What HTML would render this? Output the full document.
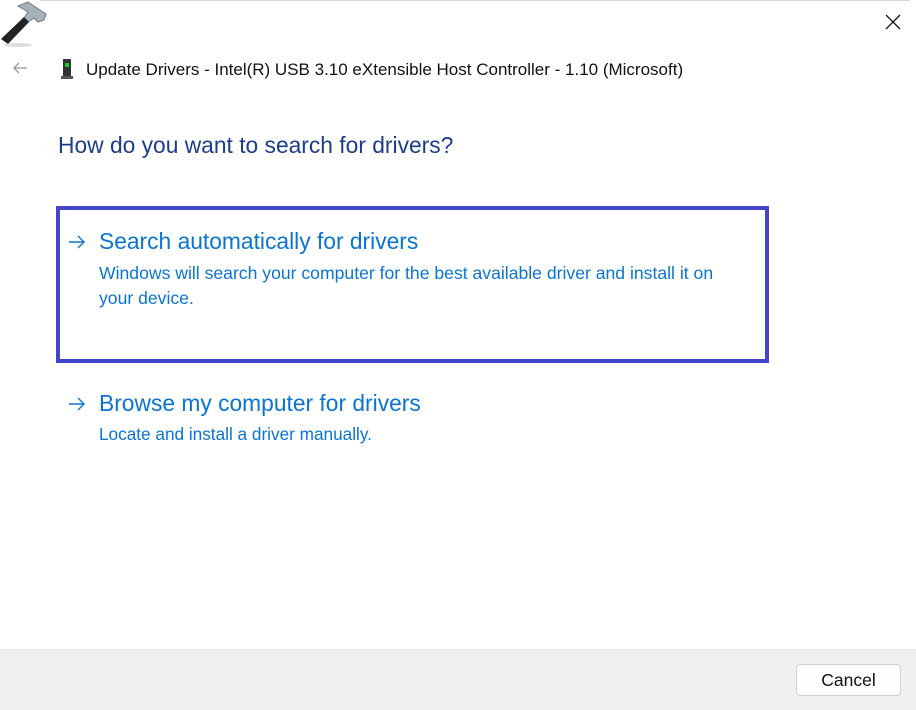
<!DOCTYPE html>
<html><head><style>
body{margin:0;width:916px;height:709px;overflow:hidden;background:#fff;font-family:"Segoe UI","Liberation Sans",sans-serif;position:relative}
.a{position:absolute;white-space:nowrap}
</style></head><body>
<div class="a" style="left:40px;top:0;width:870px;height:1px;background:#d8d8d8"></div>
<svg class="a" style="left:0;top:0" width="50" height="48" viewBox="0 0 50 48">
<path d="M18 6 L28 2 L40 10 L46 14 L44 20 L38 22 L34 18 L28 22 L24 18 L28 12 Z" fill="#a8b0b8" stroke="#707880" stroke-width="1"/>
<path d="M24 17 L29 22 L8 44 L1 39 Z" fill="#222"/>
<ellipse cx="18" cy="45" rx="14" ry="2" fill="#ddd"/>
</svg>
<svg class="a" style="left:12px;top:62px" width="16" height="12" viewBox="0 0 16 12"><path d="M15 6H2M7 1L2 6L7 11" fill="none" stroke="#999" stroke-width="1.3"/></svg>
<svg class="a" style="left:60px;top:58px" width="14" height="22" viewBox="0 0 14 22"><rect x="3" y="1" width="8" height="18" fill="#333"/><rect x="1" y="18" width="12" height="3" fill="#555"/><rect x="5" y="5" width="4" height="4" fill="#2c2"/></svg>
<div class="a" style="left:86px;top:60px;font-size:17px;color:#111">Update Drivers - Intel(R) USB 3.10 eXtensible Host Controller - 1.10 (Microsoft)</div>
<svg class="a" style="left:885px;top:14px" width="16" height="16" viewBox="0 0 16 16"><path d="M1 1L15 15M15 1L1 15" stroke="#111" stroke-width="1.3"/></svg>
<div class="a" style="left:58px;top:132px;font-size:22.8px;color:#1c3d8c">How do you want to search for drivers?</div>
<div class="a" style="left:56px;top:206px;width:705px;height:149px;border:4px solid #4444cc"></div>
<svg class="a" style="left:68px;top:235px" width="18" height="14" viewBox="0 0 18 14"><path d="M1 7H16M10 1L16 7L10 13" fill="none" stroke="#0a74d0" stroke-width="1.4"/></svg>
<div class="a" style="left:99px;top:228px;font-size:22.8px;color:#0a74d0">Search automatically for drivers</div>
<div class="a" style="left:99px;top:261px;font-size:17.6px;color:#0a74d0;line-height:25px">Windows will search your computer for the best available driver and install it on<br>your device.</div>
<svg class="a" style="left:68px;top:397px" width="18" height="14" viewBox="0 0 18 14"><path d="M1 7H16M10 1L16 7L10 13" fill="none" stroke="#0a74d0" stroke-width="1.4"/></svg>
<div class="a" style="left:99px;top:390px;font-size:22.8px;color:#0a74d0">Browse my computer for drivers</div>
<div class="a" style="left:99px;top:424px;font-size:17.2px;color:#0a74d0">Locate and install a driver manually.</div>
<div class="a" style="left:0;top:649px;width:916px;height:60px;background:#f0f0f0;border-top:1px solid #e4e4e4"></div>
<div class="a" style="left:796px;top:664px;width:103px;height:30px;background:#fdfdfd;border:1px solid #d0d0d0;border-radius:4px;text-align:center;line-height:31px;font-size:17.5px;color:#111">Cancel</div>
</body></html>
